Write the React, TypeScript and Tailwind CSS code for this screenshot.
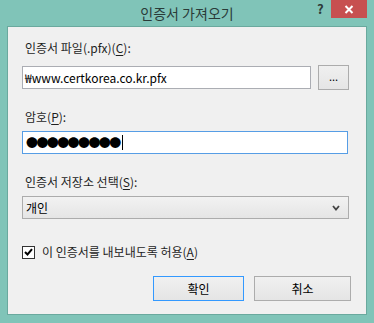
const font = { fontFamily: '"Noto Sans CJK KR", "Noto Sans", sans-serif' };

function Label({ text, hotkey }: { text: string; hotkey: string }) {
  return (
    <div className="pl-[3px] h-[16px] text-[12px] leading-[16px] text-[#1e1e1e]">
      {text}(<span className="underline underline-offset-2">{hotkey}</span>):
    </div>
  );
}

export default function App() {
  return (
    <div
      className="w-[374px] h-[323px] bg-[#80c4b8] flex flex-col overflow-hidden select-none"
      style={font}
    >
      {/* title bar */}
      <div className="relative h-[26px] shrink-0">
        <div className="absolute inset-x-0 top-[4px] text-center text-[14px] leading-[18px] text-[#2a3b38]">
          인증서 가져오기
        </div>
        <div className="absolute left-[317px] top-[1px] text-[13px] font-bold leading-[16px] text-[#2d3a38]">
          ?
        </div>
        <div className="absolute left-[331px] top-0 w-[36px] h-[18px] bg-[#c75050] flex items-center justify-center">
          <svg width="10" height="9" viewBox="0 0 10 9">
            <path d="M1.5 1 L8.5 8 M8.5 1 L1.5 8" stroke="white" strokeWidth="2" />
          </svg>
        </div>
      </div>

      {/* client area */}
      <div className="ml-[7px] w-[360px] h-[289px] border border-[#6aa99e] bg-[#f0f0f0] pl-[14px] flex flex-col">
        <div className="mt-[13px]">
          <Label text="인증서 파일(.pfx)" hotkey="C" />
        </div>

        <div className="mt-[9px] flex items-start">
          <div className="mt-[1px] w-[289px] h-[23px] border border-[#abadb3] bg-white pl-[2px] text-[12px] leading-[21px] text-black">
            ₩www.certkorea.co.kr.pfx
          </div>
          <div className="ml-[7px] w-[31px] h-[25px] border border-[#acacac] bg-gradient-to-b from-[#f0f0f0] to-[#e5e5e5] flex items-center justify-center text-[11px] leading-none text-black pb-[2px]">
            ...
          </div>
        </div>

        <div className="mt-[19px]">
          <Label text="암호" hotkey="P" />
        </div>

        <div className="mt-[6px] w-[326px] h-[23px] border border-[#569de5] bg-white pl-[3px] flex items-center">
          <span className="text-[12px] leading-[21px] text-black tracking-[-1.6px]">●●●●●●●●●</span>
          <span className="ml-[2px] w-[1px] h-[15px] bg-black" />
        </div>

        <div className="mt-[20px]">
          <Label text="인증서 저장소 선택" hotkey="S" />
        </div>

        <div className="mt-[6px] w-[327px] h-[23px] border border-[#acacac] bg-gradient-to-b from-[#f2f2f2] to-[#e5e5e5] pl-[3px] pr-[8px] flex items-center justify-between">
          <span className="text-[12px] leading-[21px] text-black">개인</span>
          <svg width="8" height="6" viewBox="0 0 8 6">
            <path d="M1 1 L4 4.5 L7 1" stroke="#444" strokeWidth="1.8" fill="none" />
          </svg>
        </div>

        <div className="mt-[25px] h-[16px] flex items-center">
          <div className="w-[13px] h-[13px] border border-[#333] bg-white flex items-center justify-center">
            <svg width="9" height="8" viewBox="0 0 9 8">
              <path d="M1 4 L3.5 6.5 L8 1.2" stroke="black" strokeWidth="2" fill="none" />
            </svg>
          </div>
          <span className="ml-[7px] text-[12px] leading-[16px] text-[#1e1e1e]">
            이 인증서를 내보내도록 허용(<span className="underline underline-offset-2">A</span>)
          </span>
        </div>

        <div className="mt-[16px] flex pl-[131px]">
          <div className="w-[91px] h-[25px] border border-[#3399ff] bg-gradient-to-b from-[#f0f0f0] to-[#e5e5e5] flex items-center justify-center text-[12px] text-black">
            확인
          </div>
          <div className="ml-[10px] w-[97px] h-[25px] border border-[#acacac] bg-gradient-to-b from-[#f0f0f0] to-[#e5e5e5] flex items-center justify-center text-[12px] text-black">
            취소
          </div>
        </div>
      </div>
    </div>
  );
}
